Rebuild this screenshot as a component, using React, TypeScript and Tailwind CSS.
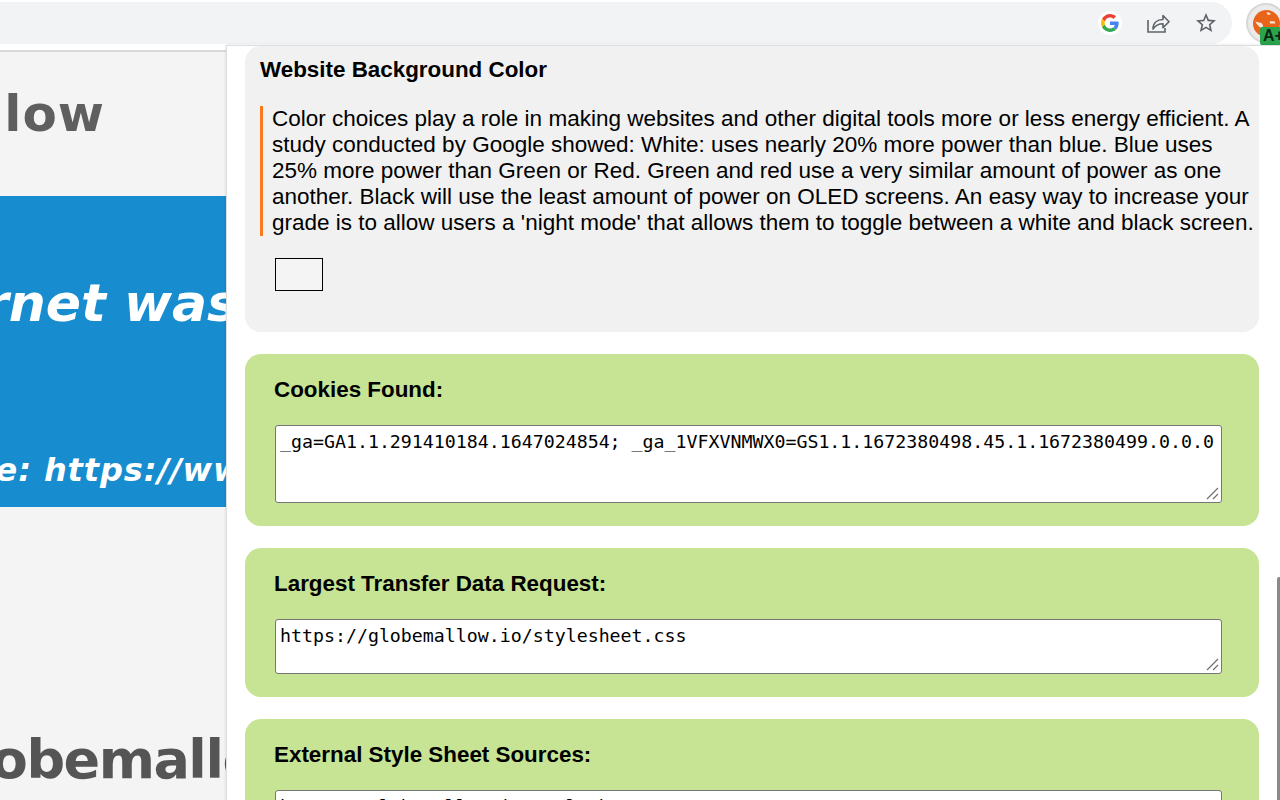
const mono = "font-['DejaVu_Sans_Mono',monospace] text-[18.25px] leading-[22px] text-black";
const dejavu = "font-['DejaVu_Sans',sans-serif]";

interface DataCard {
  title: string;
  value: string;
  boxHeight: string;
  cardHeight: string;
}

const cards: DataCard[] = [
  {
    title: "Cookies Found:",
    value: "_ga=GA1.1.291410184.1647024854; _ga_1VFXVNMWX0=GS1.1.1672380498.45.1.1672380499.0.0.0",
    boxHeight: "h-[78px]",
    cardHeight: "h-[172px]",
  },
  {
    title: "Largest Transfer Data Request:",
    value: "https://globemallow.io/stylesheet.css",
    boxHeight: "h-[55px]",
    cardHeight: "h-[149px]",
  },
  {
    title: "External Style Sheet Sources:",
    value: "https://globemallow.io/stylesheet.css",
    boxHeight: "h-[55px]",
    cardHeight: "h-[149px]",
  },
];

function GoogleIcon() {
  return (
    <span className="flex h-[24px] w-[24px] items-center justify-center rounded-full bg-white">
      <svg width="18" height="18" viewBox="0 0 48 48">
        <path fill="#EA4335" d="M24 9.500c3.500 0 6.700 1.200 9.200 3.600l6.900-6.900C35.900 2.400 30.500 0 24 0 14.600 0 6.500 5.400 2.600 13.200l8 6.200C12.400 13.700 17.700 9.500 24 9.500z" />
        <path fill="#4285F4" d="M47 24.500c0-1.600-.1-3.100-.4-4.500H24v9h12.900c-.6 3-2.200 5.500-4.700 7.200l7.700 6c4.500-4.200 7.100-10.300 7.100-17.700z" />
        <path fill="#FBBC05" d="M10.500 28.600c-.5-1.400-.8-3-.8-4.600s.3-3.200.8-4.600l-8-6.200C.9 16.500 0 20.100 0 24s.9 7.500 2.600 10.800l7.900-6.200z" />
        <path fill="#34A853" d="M24 48c6.500 0 11.900-2.100 15.900-5.800l-7.700-6c-2.200 1.400-4.900 2.300-8.200 2.300-6.300 0-11.600-4.200-13.500-9.900l-8 6.200C6.500 42.600 14.600 48 24 48z" />
      </svg>
    </span>
  );
}

function ShareIcon() {
  return (
    <svg width="24" height="24" viewBox="0 0 24 24" fill="none" stroke="#5f6368" strokeWidth="1.6">
      <path d="M2 9v12h17v-4" />
      <path d="M7 18c0-6 4-9.500 10-9.500V4.500l6 6.200-6 6v-4c-4 0-7.500 1.500-10 5.300z" strokeLinejoin="round" />
    </svg>
  );
}

function StarIcon() {
  return (
    <svg width="24" height="24" viewBox="0 0 24 24" fill="#5f6368">
      <path d="M22 9.240l-7.190-.62L12 2 9.190 8.630 2 9.240l5.460 4.730L5.820 21 12 17.270 18.180 21l-1.630-7.030L22 9.240zM12 15.400l-3.760 2.270 1-4.280-3.320-2.880 4.380-.38L12 6.100l1.710 4.040 4.380.38-3.320 2.880 1 4.280L12 15.400z" />
    </svg>
  );
}

function ExtensionIcon() {
  return (
    <div className="relative h-[40px] w-[40px]">
      <div className="flex h-[40px] w-[40px] items-center justify-center rounded-full border-2 border-[#d8d8d8] bg-[#ebebeb]">
        <svg width="27" height="27" viewBox="0 0 24 24">
          <circle cx="12" cy="12" r="12" fill="#e8641b" />
          <path fill="#f7e4d6" d="M2 10c2 1 5 1 6 2s1 3 1 5l1 3c-1-1-2-3-3-4s-4-3-5-6zM12 2c2 0 3 .5 4 1.500l-2 1-1-.5zM15 10h4l1 2h-5z" />
        </svg>
      </div>
      <span className="absolute left-[14px] top-[24px] flex h-[18px] w-[24px] items-center rounded-[2px] bg-[#2aa34d] pl-[3px] font-['Liberation_Sans',sans-serif] text-[16px] font-bold leading-none text-[#0c2412]">
        A+
      </span>
    </div>
  );
}

function ResizeGrip() {
  return (
    <svg className="absolute bottom-[3px] right-[3px]" width="13" height="13" viewBox="0 0 13 13" stroke="#6f6f6f" strokeWidth="1.2">
      <path d="M1 12 12 1M7 12l5-5" />
    </svg>
  );
}

function PageBehind() {
  return (
    <div className={`flex w-[226px] shrink-0 flex-col overflow-hidden bg-[#f4f4f4] ${dejavu}`}>
      <div className="flex h-[144px] w-[105px] shrink-0 items-center justify-end whitespace-nowrap pb-[20px] text-[50px] font-bold text-[#5f5f5f]">
        <span className="tracking-[1px]">Globemallow</span>
      </div>
      <div className="h-[311px] w-full shrink-0 overflow-hidden bg-[#178ccf] font-bold italic text-white">
        <div className="flex h-[216px] w-[238px] items-center justify-end whitespace-nowrap pb-[2px] text-[52px]">
          The internet was
        </div>
        <div className="mt-[27px] flex h-[40px] w-[274px] items-center justify-end whitespace-nowrap pt-[22px] text-[32px] tracking-[0.9px]">
          Source: https://www
        </div>
      </div>
      <div className="flex h-[293px] w-[258px] shrink-0 items-end justify-end whitespace-nowrap text-[54px] font-bold tracking-[-1.5px] text-[#555555]">
        Globemallo
      </div>
    </div>
  );
}

function TextCard({ title, value, boxHeight, cardHeight }: DataCard) {
  return (
    <section className={`${cardHeight} shrink-0 rounded-[16px] bg-[#c6e493] pl-[29px] pr-[37px] pt-[23px]`}>
      <h2 className="mb-[22px] h-[26px] font-['Liberation_Sans',sans-serif] text-[22.4px] font-bold leading-[26px] text-black">
        {title}
      </h2>
      <div className={`${boxHeight} relative ml-px w-[947px]`}>
        <textarea
          readOnly
          defaultValue={value}
          className={`block h-full w-full resize-none rounded-[3px] border border-[#767676] bg-white px-[4px] pb-[4px] pt-[5px] ${mono} outline-none`}
        />
        <ResizeGrip />
      </div>
    </section>
  );
}

export default function App() {
  return (
    <div className="relative flex h-[800px] w-[1280px] flex-col overflow-hidden bg-white">
      <header className="h-[50px] shrink-0 pt-[2px]">
        <div className="flex h-[42px] w-[1232px] items-center justify-end rounded-r-[21px] bg-[#f1f3f4] pr-[14px]">
          <div className="flex items-center gap-[24px]">
            <GoogleIcon />
            <ShareIcon />
            <StarIcon />
          </div>
        </div>
      </header>
      <main className="flex min-h-0 flex-1 border-t-2 border-[#d9d9d9]">
        <PageBehind />
      </main>

      {/* extension popup sits over the page */}
      <div className="absolute left-[1246px] top-[3px]">
        <ExtensionIcon />
      </div>
      <div className="absolute bottom-0 left-[226px] right-0 top-[45px] flex flex-col gap-[22px] overflow-hidden border-l border-t border-[#dedede] bg-white pl-[18px] pr-[21px] font-['Liberation_Sans',sans-serif] shadow-[0_0_3px_rgba(0,0,0,0.12)]">
        <section className="h-[286px] shrink-0 rounded-[16px] bg-[#f1f1f1] pl-[15px] pr-[4px] pt-[11px]">
          <h2 className="h-[26px] text-[22.4px] font-bold leading-[26px] text-black">
            Website Background Color
          </h2>
          <p className="mt-[23px] border-l-[3px] border-[#fb7a1e] pl-[9px] text-[22.5px] leading-[26px] text-black">
            Color choices play a role in making websites and other digital tools more or less energy efficient. A
            study conducted by Google showed: White: uses nearly 20% more power than blue. Blue uses 25% more power
            than Green or Red. Green and red use a very similar amount of power as one another. Black will use the
            least amount of power on OLED screens. An easy way to increase your grade is to allow users a 'night
            mode' that allows them to toggle between a white and black screen.
          </p>
          <button className="ml-[15px] mt-[22px] block h-[33px] w-[48px] border border-black bg-[#f4f4f4]" />
        </section>
        {cards.map((card) => (
          <TextCard key={card.title} {...card} />
        ))}
      </div>
      <div className="absolute bottom-0 right-0 top-[577px] w-[3px] rounded-tl-[2px] bg-[#8a8a8a]" />
    </div>
  );
}
